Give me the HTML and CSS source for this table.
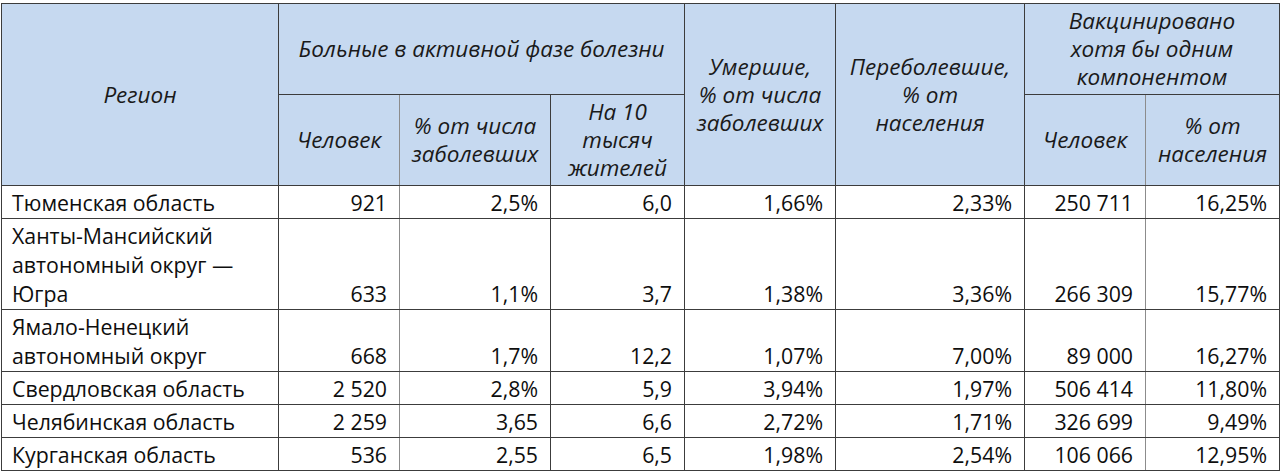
FILE: index.html
```html
<!DOCTYPE html>
<html lang="ru">
<head>
<meta charset="utf-8">
<title>Таблица</title>
<link rel="stylesheet" href="styles.css">
</head>
<body>
<table class="grid">
  <colgroup>
    <col class="c-region">
    <col class="c-people">
    <col class="c-pct">
    <col class="c-per10">
    <col class="c-dead">
    <col class="c-recov">
    <col class="c-vpeople">
    <col class="c-vpct">
  </colgroup>
  <thead>
    <tr class="hrow">
      <th rowspan="2" class="dark-r">Регион</th>
      <th colspan="3" class="dark-r">Больные в активной фазе болезни</th>
      <th rowspan="2" class="dark-r">Умершие,<br>% от числа<br>заболевших</th>
      <th rowspan="2" class="dark-r">Переболевшие,<br>% от<br>населения</th>
      <th colspan="2" class="dark-r">Вакцинировано<br>хотя бы одним<br>компонентом</th>
    </tr>
    <tr class="hrow">
      <th class="gray-r">Человек</th>
      <th class="dark-r">% от числа<br>заболевших</th>
      <th class="dark-r">На 10<br>тысяч<br>жителей</th>
      <th class="gray-r">Человек</th>
      <th class="dark-r">% от<br>населения</th>
    </tr>
  </thead>
  <tbody>
    <tr>
      <td class="name dark-r">Тюменская область</td>
      <td class="gray-r">921</td><td class="dark-r">2,5%</td><td class="dark-r">6,0</td>
      <td class="dark-r">1,66%</td><td class="dark-r">2,33%</td>
      <td class="gray-r">250 711</td><td class="dark-r">16,25%</td>
    </tr>
    <tr>
      <td class="name dark-r">Ханты-Мансийский<br>автономный округ —<br>Югра</td>
      <td class="gray-r">633</td><td class="dark-r">1,1%</td><td class="dark-r">3,7</td>
      <td class="dark-r">1,38%</td><td class="dark-r">3,36%</td>
      <td class="gray-r">266 309</td><td class="dark-r">15,77%</td>
    </tr>
    <tr>
      <td class="name dark-r">Ямало-Ненецкий<br>автономный округ</td>
      <td class="gray-r">668</td><td class="dark-r">1,7%</td><td class="dark-r">12,2</td>
      <td class="dark-r">1,07%</td><td class="dark-r">7,00%</td>
      <td class="gray-r">89 000</td><td class="dark-r">16,27%</td>
    </tr>
    <tr>
      <td class="name dark-r">Свердловская область</td>
      <td class="gray-r">2 520</td><td class="dark-r">2,8%</td><td class="dark-r">5,9</td>
      <td class="dark-r">3,94%</td><td class="dark-r">1,97%</td>
      <td class="gray-r">506 414</td><td class="dark-r">11,80%</td>
    </tr>
    <tr>
      <td class="name dark-r">Челябинская область</td>
      <td class="gray-r">2 259</td><td class="dark-r">3,65</td><td class="dark-r">6,6</td>
      <td class="dark-r">2,72%</td><td class="dark-r">1,71%</td>
      <td class="gray-r">326 699</td><td class="dark-r">9,49%</td>
    </tr>
    <tr>
      <td class="name dark-r">Курганская область</td>
      <td class="gray-r">536</td><td class="dark-r">2,55</td><td class="dark-r">6,5</td>
      <td class="dark-r">1,98%</td><td class="dark-r">2,54%</td>
      <td class="gray-r">106 066</td><td class="dark-r">12,95%</td>
    </tr>
  </tbody>
</table>
</body>
</html>
```

FILE: styles.css
```css
html, body {
  margin: 0;
  padding: 0;
  background: #ffffff;
}

body {
  padding: 3px 0 0 1px;
  font-family: "Open Sans", "Noto Sans", sans-serif;
  color: #0e0e0e;
}

.grid {
  border-collapse: collapse;
  table-layout: fixed;
  width: 1279px;
  border: 1px solid #3c3c3c;
}

.c-region { width: 277px; }
.c-people { width: 121px; }
.c-pct { width: 151px; }
.c-per10 { width: 134px; }
.c-dead { width: 151px; }
.c-recov { width: 189px; }
.c-vpeople { width: 121px; }
.c-vpct { width: 134px; }

.grid th,
.grid td {
  border: 1px solid #3c3c3c;
}

.grid th.gray-r,
.grid td.gray-r {
  border-right: 1px solid #8c8c8c;
}

.grid th {
  background: #c6d9f0;
  font-style: italic;
  font-weight: normal;
  font-size: 22.5px;
  line-height: 28px;
  color: #1a1a1a;
  text-align: center;
  vertical-align: middle;
  padding: 0 2px;
  white-space: nowrap;
}

.hrow {
  height: 91px;
}

.grid td {
  font-size: 21.3px;
  line-height: 29px;
  text-align: right;
  vertical-align: bottom;
  padding: 2px 12px 1px 10px;
  white-space: nowrap;
}

.grid td.name {
  text-align: left;
}
```
